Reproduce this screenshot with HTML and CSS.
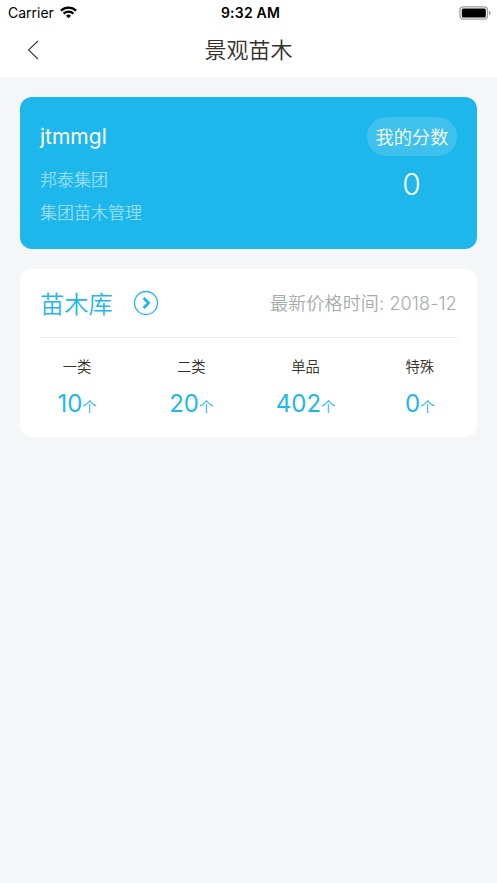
FILE: index.html
```html
<!DOCTYPE html>
<html lang="zh-CN">
<head>
    <meta charset="UTF-8">
    <meta name="viewport" content="width=device-width, initial-scale=1.0">
    <title>景观苗木</title>
    <link rel="stylesheet" href="styles.css">
</head>
<body>
    <header class="header">
        <div class="status-bar">
            <div class="carrier">
                <span>Carrier</span>
                <svg class="wifi" viewBox="0 0 18 13" width="17" height="13">
                    <path d="M1 4.6a11.5 11.5 0 0 1 16 0" fill="none" stroke="#000" stroke-width="2.6"/>
                    <path d="M3.8 7.7a7.5 7.5 0 0 1 10.4 0" fill="none" stroke="#000" stroke-width="2.3"/>
                    <path d="M9 12.6 6.3 9.9a3.9 3.9 0 0 1 5.4 0z"/>
                </svg>
            </div>
            <span class="time">9:32 AM</span>
            <svg class="battery" viewBox="0 0 32 14" width="32" height="14">
                <rect x=".9" y=".8" width="27.6" height="12.4" rx="3.4" fill="none" stroke="#a0a0a0" stroke-width="1.3"/>
                <rect x="2.8" y="2.6" width="24" height="8.8" rx="1.5"/>
                <path d="M30 4.8q1.6.6 1.6 2.2t-1.6 2.2z" fill="#999"/>
            </svg>
        </div>
        <nav class="nav">
            <svg class="back" viewBox="0 0 12 20" width="12" height="20">
                <path d="M11 1 1.5 10 11 19" fill="none" stroke="#3c3a38" stroke-width="1.1"/>
            </svg>
            <h1 class="title">景观苗木</h1>
        </nav>
    </header>

    <main class="content">
        <section class="card user-card">
            <div class="user">
                <p class="name">jtmmgl</p>
                <p class="company">邦泰集团</p>
                <p class="role">集团苗木管理</p>
            </div>
            <div class="score">
                <span class="score-label">我的分数</span>
                <span class="score-value">0</span>
            </div>
        </section>

        <section class="card library">
            <div class="library-head">
                <h2 class="library-title">苗木库</h2>
                <svg class="go" viewBox="0 0 26 26" width="26" height="26">
                    <circle cx="13" cy="13" r="11.5" fill="none" stroke="#1eb7eb" stroke-width="1.3"/>
                    <path d="M10.6 8l5 5-5 5" fill="none" stroke="#1eb7eb" stroke-width="2.8"/>
                </svg>
                <span class="updated">最新价格时间: 2018-12</span>
            </div>
            <div class="stats">
                <div class="stat"><span class="label">一类</span><span class="count">10<small>个</small></span></div>
                <div class="stat"><span class="label">二类</span><span class="count">20<small>个</small></span></div>
                <div class="stat"><span class="label">单品</span><span class="count">402<small>个</small></span></div>
                <div class="stat"><span class="label">特殊</span><span class="count">0<small>个</small></span></div>
            </div>
        </section>
    </main>
</body>
</html>
```

FILE: styles.css
```css
* {
    box-sizing: border-box;
}

body {
    margin: 0;
    min-height: 100vh;
    background: #f4f6f8;
    color: #35312b;
    font-family: Inter, "Noto Sans CJK SC", sans-serif;
    font-weight: 350;
}

h1, h2, p {
    margin: 0;
    font-weight: 350;
}

.header {
    height: 77px;
    background: #fff;
}

.status-bar {
    display: grid;
    grid-template-columns: 1fr auto 1fr;
    align-items: center;
    height: 25px;
    padding: 0 6px 0 8px;
    color: #000;
    font-size: 14px;
    font-weight: 400;
}

.carrier {
    display: flex;
    align-items: center;
    gap: 6px;
}

.time {
    padding-left: 2px;
    font-weight: 600;
    letter-spacing: 0.2px;
}

.battery {
    justify-self: end;
}

.nav {
    display: grid;
    grid-template-columns: 1fr auto 1fr;
    align-items: center;
    height: 50px;
    padding: 0 27px;
}

.title {
    font-size: 22px;
    line-height: 32px;
}

.content {
    display: flex;
    flex-direction: column;
    gap: 20px;
    padding: 20px;
}

.card {
    border-radius: 12px;
}

.user-card {
    display: flex;
    justify-content: space-between;
    height: 152px;
    padding: 20px;
    background: #1eb7eb;
    color: #fff;
}

.name {
    font-size: 21px;
    font-weight: 400;
    line-height: 40px;
}

.company, .role {
    color: rgba(255, 255, 255, 0.55);
    font-size: 17px;
    line-height: 33px;
}

.company {
    margin-top: 7px;
}

.score {
    display: flex;
    flex-direction: column;
    align-items: center;
}

.score-label {
    width: 90px;
    height: 39px;
    border-radius: 20px;
    background: rgba(255, 255, 255, 0.15);
    font-size: 18.2px;
    line-height: 41px;
    text-align: center;
}

.score-value {
    margin-top: 9px;
    padding-right: 1px;
    font-size: 30px;
    line-height: 38px;
}

.library {
    height: 168px;
    padding: 0 20px;
    background: #fff;
}

.library-head {
    display: flex;
    align-items: center;
    height: 69px;
    border-bottom: 1px solid #e6e8e8;
}

.library-title {
    margin-top: -2px;
    color: #1eb7eb;
    font-size: 24.3px;
}

.go {
    margin-left: 20px;
}

.updated {
    margin-top: -2px;
    margin-left: auto;
    color: #a5aaaa;
    font-size: 18px;
    letter-spacing: 0.15px;
}

.stats {
    display: grid;
    grid-template-columns: repeat(4, 1fr);
    margin: 0 -20px;
    padding-top: 16px;
}

.stat {
    display: flex;
    flex-direction: column;
    align-items: center;
}

.label {
    font-size: 14.3px;
    line-height: 26px;
}

.count {
    margin-top: 4px;
    color: #1eb7eb;
    font-size: 24px;
    font-weight: 380;
    line-height: 40px;
}

.count small {
    font-size: 14.5px;
    font-weight: 350;
}
```
